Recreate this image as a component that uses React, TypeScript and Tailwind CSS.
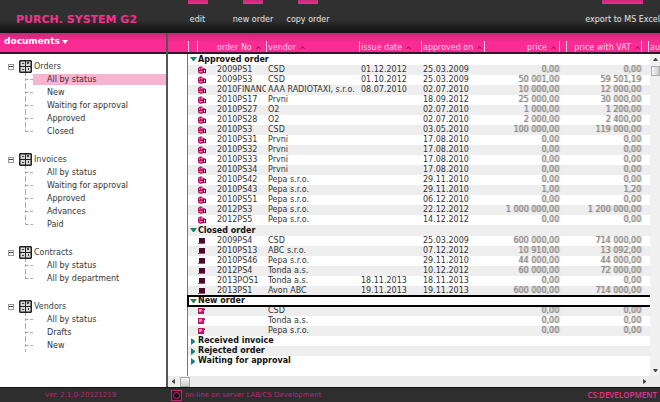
import { Fragment } from 'react'

type Status = 'approved' | 'closed' | 'draft'

interface Order {
  no?: string
  vendor: string
  issued?: string
  approved?: string
  price: string
  priceVat: string
}

interface OrderGroup {
  title: string
  status?: Status
  selected?: boolean
  orders: Order[]
}

interface NavGroup {
  title: string
  items: string[]
  active?: string
  open?: boolean
}

const navGroups: NavGroup[] = [
  {
    title: 'Orders',
    items: ['All by status', 'New', 'Waiting for approval', 'Approved', 'Closed'],
    active: 'All by status',
  },
  {
    title: 'Invoices',
    items: ['All by status', 'Waiting for approval', 'Approved', 'Advances', 'Paid'],
  },
  { title: 'Contracts', items: ['All by status', 'All by department'] },
  { title: 'Vendors', items: ['All by status', 'Drafts', 'New'], open: true },
]

const orderGroups: OrderGroup[] = [
  {
    title: 'Approved order',
    status: 'approved',
    orders: [
      { no: '2009PS1', vendor: 'CSD', issued: '01.12.2012', approved: '25.03.2009', price: '0,00', priceVat: '0,00' },
      { no: '2009PS3', vendor: 'CSD', issued: '01.10.2012', approved: '25.03.2009', price: '50 001,00', priceVat: '59 501,19' },
      { no: '2010FINANC', vendor: 'AAA RADIOTAXI, s.r.o.', issued: '08.07.2010', approved: '02.07.2010', price: '10 000,00', priceVat: '12 000,00' },
      { no: '2010PS17', vendor: 'Prvni', approved: '18.09.2012', price: '25 000,00', priceVat: '30 000,00' },
      { no: '2010PS27', vendor: 'O2', approved: '02.07.2010', price: '1 000,00', priceVat: '1 200,00' },
      { no: '2010PS28', vendor: 'O2', approved: '02.07.2010', price: '2 000,00', priceVat: '2 400,00' },
      { no: '2010PS3', vendor: 'CSD', approved: '03.05.2010', price: '100 000,00', priceVat: '119 000,00' },
      { no: '2010PS31', vendor: 'Prvni', approved: '17.08.2010', price: '0,00', priceVat: '0,00' },
      { no: '2010PS32', vendor: 'Prvni', approved: '17.08.2010', price: '0,00', priceVat: '0,00' },
      { no: '2010PS33', vendor: 'Prvni', approved: '17.08.2010', price: '0,00', priceVat: '0,00' },
      { no: '2010PS34', vendor: 'Prvni', approved: '17.08.2010', price: '0,00', priceVat: '0,00' },
      { no: '2010PS42', vendor: 'Pepa s.r.o.', approved: '29.11.2010', price: '0,00', priceVat: '0,00' },
      { no: '2010PS43', vendor: 'Pepa s.r.o.', approved: '29.11.2010', price: '1,00', priceVat: '1,20' },
      { no: '2010PS51', vendor: 'Pepa s.r.o.', approved: '06.12.2010', price: '0,00', priceVat: '0,00' },
      { no: '2012PS3', vendor: 'Pepa s.r.o.', approved: '22.12.2012', price: '1 000 000,00', priceVat: '1 200 000,00' },
      { no: '2012PS5', vendor: 'Pepa s.r.o.', approved: '14.12.2012', price: '0,00', priceVat: '0,00' },
    ],
  },
  {
    title: 'Closed order',
    status: 'closed',
    orders: [
      { no: '2009PS4', vendor: 'CSD', approved: '25.03.2009', price: '600 000,00', priceVat: '714 000,00' },
      { no: '2010PS13', vendor: 'ABC s.r.o.', approved: '07.12.2012', price: '10 910,00', priceVat: '13 092,00' },
      { no: '2010PS46', vendor: 'Pepa s.r.o.', approved: '29.11.2010', price: '44 000,00', priceVat: '44 000,00' },
      { no: '2012PS4', vendor: 'Tonda a.s.', approved: '10.12.2012', price: '60 000,00', priceVat: '72 000,00' },
      { no: '2013POS1', vendor: 'Tonda a.s.', issued: '18.11.2013', approved: '18.11.2013', price: '0,00', priceVat: '0,00' },
      { no: '2013PS1', vendor: 'Avon ABC', issued: '19.11.2013', approved: '19.11.2013', price: '600 000,00', priceVat: '714 000,00' },
    ],
  },
  {
    title: 'New order',
    status: 'draft',
    selected: true,
    orders: [
      { vendor: 'CSD', price: '0,00', priceVat: '0,00' },
      { vendor: 'Tonda a.s.', price: '0,00', priceVat: '0,00' },
      { vendor: 'Pepa s.r.o.', price: '0,00', priceVat: '0,00' },
    ],
  },
  { title: 'Received invoice', orders: [] },
  { title: 'Rejected order', orders: [] },
  { title: 'Waiting for approval', orders: [] },
]

function StatusIcon({ status }: { status?: Status }) {
  if (status === 'approved') {
    return (
      <svg viewBox="0 0 9 8" className="h-2 w-[9px]">
        <path d="M1 2 3 .5h2L6 2l2 .5V7H6l-1 .8H3L1 6.5z" fill="#b81263" />
        <path d="M2.2 2.6h1v1h-1zM4.4 1.6h1v1.6h-1z" fill="#fbd5e6" />
        <path d="M2.5 5 3.5 6h1L5.5 5" fill="none" stroke="#fbd5e6" strokeWidth="0.8" />
        <path d="M6 3h1v4H6zM8 3h1v4H8z" fill="#4a0428" />
        <path d="M7 4h1v2H7z" fill="#f3dce7" />
      </svg>
    )
  }
  if (status === 'closed') {
    return (
      <svg viewBox="0 0 9 8" className="h-2 w-[9px]">
        <path d="M2 1h6v5H2z" fill="#4c0a2c" />
        <path d="M1 6h7v1H1z" fill="#8d5572" />
      </svg>
    )
  }
  return (
    <svg viewBox="0 0 9 8" className="h-2 w-[9px]">
      <path d="M1 1h6v6H1z" fill="#b5125f" />
      <path d="M2 2h3v2L4 5H2z" fill="#f48fbe" />
      <path d="M4 4.5 7 1.8l1 1-3 2.9H4z" fill="#e5197d" />
      <path d="M7 1.5h1v1.6H7z" fill="#7b0a43" />
    </svg>
  )
}

function FolderIcon() {
  return (
    <svg viewBox="0 0 13 13" className="size-[13px] shrink-0">
      <path d="M1 0h11l1 1v11l-1 1H1l-1-1V1z" fill="#222" />
      <path d="M1.5 1.5H6V6H1.5zM7 1.5h4.5V6H7zM1.5 7H6v4.5H1.5zM7 7h4.5v4.5H7z" fill="#d8d8d8" />
      <path d="M3 3h2v1H3zM8 2h2v2H8zM3 9h2v1H3zM9 8h1v2H9z" fill="#444" />
    </svg>
  )
}

function SortMark() {
  return (
    <svg viewBox="0 0 5 3" className="ml-1 inline-block h-[3px] w-[5px] align-middle">
      <path d="M0.5 3 2.5 0.5 4.5 3" fill="none" stroke="#8c1550" />
    </svg>
  )
}

function Tick() {
  return <div className="mr-px h-[11px] w-px shrink-0 bg-[#ffc4e0]" />
}

function NavTree({ group }: { group: NavGroup }) {
  return (
    <section>
      <h2 className="flex h-[13px] items-center pl-2">
        <button
          aria-label={`Collapse ${group.title}`}
          className="mr-[5px] flex size-[6px] items-center justify-center border border-[#999]"
        >
          <span className="h-px w-1 bg-[#444]" />
        </button>
        <FolderIcon />
        <span className="ml-[2px] text-[#3c3c3c]">{group.title}</span>
      </h2>
      <ul className="ml-[25px]">
        {group.items.map((item, i) => (
          <li key={item} className="flex h-[13px]">
            <span
              className={`flex w-2 flex-col border-l border-dashed border-[#aaa] ${
                i === group.items.length - 1 && !group.open ? 'h-[7px]' : ''
              }`}
            >
              <span className="mt-[6px] border-t border-dashed border-[#aaa]" />
            </span>
            <a
              href="#"
              className={`my-px flex flex-1 items-center pl-[14px] leading-[11px] ${
                item === group.active ? 'bg-[#f5b4cf]' : ''
              }`}
            >
              {item}
            </a>
          </li>
        ))}
      </ul>
    </section>
  )
}

function OrdersTable() {
  let line = 0
  const stripe = () => (line++ % 2 === 1 ? 'bg-[#eee]' : 'bg-white')

  return (
    <table className="w-full table-fixed border-separate border-spacing-0 text-[8px] leading-[10px] whitespace-nowrap text-[#333]">
      <colgroup>
        <col className="w-[20px]" />
        <col className="w-[9px]" />
        <col className="w-[20px]" />
        <col className="w-[49px]" />
        <col className="w-[93px]" />
        <col className="w-[62px]" />
        <col className="w-[63px]" />
        <col className="w-[75px]" />
        <col className="w-[7px]" />
        <col className="w-[75px]" />
        <col className="w-[7px]" />
        <col />
      </colgroup>
      <thead>
        <tr className="h-[21px] bg-linear-to-b from-[#c42a74] via-[#fb2b94] via-45% to-[#fb2b94] text-left align-bottom leading-[13px] text-[#fbd3e6] [&>th]:border-b-2 [&>th]:border-[#2c1a22] [&>th]:p-0 [&>th]:font-normal">
          <th />
          <th><Tick /></th>
          <th><Tick /></th>
          <th><div className="flex h-[11px]"><span>order No<SortMark /></span></div></th>
          <th><div className="flex h-[11px]"><Tick /><span>vendor<SortMark /></span></div></th>
          <th><div className="flex h-[11px]"><Tick /><span>issue date<SortMark /></span></div></th>
          <th><div className="flex h-[11px]"><Tick /><span>approved on<SortMark /></span></div></th>
          <th><div className="flex h-[11px] justify-between"><Tick /><span className="pr-[3px]">price<SortMark /></span></div></th>
          <th><Tick /></th>
          <th><div className="flex h-[11px] justify-between"><Tick /><span className="pr-px">price with VAT<SortMark /></span></div></th>
          <th><Tick /></th>
          <th><div className="flex h-[11px]"><Tick /><span>au</span></div></th>
        </tr>
      </thead>
      <tbody className="[&_td]:p-0">
        {orderGroups.map((group) => (
          <Fragment key={group.title}>
            <tr className={group.status && !group.selected ? 'h-[11px]' : 'h-[10px]'}>
              <td className="border-r border-[#777]" />
              <th
                colSpan={11}
                className={`p-0 text-left font-bold text-[#111] ${stripe()} ${
                  group.selected ? 'outline-2 -outline-offset-1 outline-black' : ''
                }`}
              >
                <button className="flex items-center">
                  <svg viewBox="0 0 7 7" className="mr-px ml-[2px] size-[7px]">
                    <path d={group.orders.length ? 'M0 1h7L4 5H3z' : 'M1 0v7l4-3V3z'} fill="#0d8478" />
                  </svg>
                  {group.title}
                </button>
              </th>
            </tr>
            {group.orders.map((order, i) => (
              <tr key={i} className={`h-[10px] ${stripe()}`}>
                <td className="border-r border-[#777] bg-white" />
                <td />
                <td><StatusIcon status={group.status} /></td>
                <td className="overflow-hidden">{order.no}</td>
                <td className="pl-[2px]!">{order.vendor}</td>
                <td className="pl-[2px]!">{order.issued}</td>
                <td className="pl-[2px]!">{order.approved}</td>
                <td className="text-right text-[#888] text-shadow-[1px_0_1px_#999]">{order.price}</td>
                <td />
                <td className="text-right text-[#888] text-shadow-[1px_0_1px_#999]">{order.priceVat}</td>
                <td />
                <td />
              </tr>
            ))}
          </Fragment>
        ))}
      </tbody>
    </table>
  )
}

function HeaderButton({ label, tab, className }: { label: string; tab: string; className: string }) {
  return (
    <button className={`flex flex-col items-center gap-[11px] whitespace-nowrap ${className}`}>
      <span className={`h-[4px] bg-linear-to-b from-[#c42a74] to-[#f52c90] ${tab}`} />
      <span className="leading-[10px]">{label}</span>
    </button>
  )
}

export default function App() {
  return (
    <div className="flex min-h-screen flex-col overflow-hidden bg-white font-['DejaVu_Sans','Verdana',sans-serif] text-[8px] text-[#333]">
      <header className="flex h-[33px] bg-linear-to-b from-[#303030] from-60% to-[#111]">
        <h1 className="w-[187px] pt-[12px] pl-4 text-[11px] leading-[15px] font-bold text-[#f5308f]">PURCH. SYSTEM G2</h1>
        <nav className="flex flex-1 text-[#e4e4e4]">
          <HeaderButton label="edit" tab="w-5" className="w-[21px]" />
          <HeaderButton label="new order" tab="w-5" className="ml-[24px] w-[42px]" />
          <HeaderButton label="copy order" tab="w-5" className="ml-[12px] w-[44px]" />
          <HeaderButton label="export to MS Excel" tab="w-[41px]" className="ml-auto" />
        </nav>
      </header>
      <div className="flex flex-1">
        <aside className="flex w-[166px] shrink-0 flex-col">
          <div className="h-[21px] border-b-2 border-[#2c1a22] bg-linear-to-b from-[#c42a74] via-[#fb2b94] via-45% to-[#fb2b94]">
            <button className="ml-1 flex h-[18px] items-center text-[9px] font-bold text-white">
              documents
              <svg viewBox="0 0 6 4" className="ml-[2px] h-1 w-[6px]">
                <path d="M0 0h6L3 4z" fill="#fff" />
              </svg>
            </button>
          </div>
          <div className="flex flex-col gap-[15px] pt-[6px]">
            {navGroups.map((group) => (
              <NavTree key={group.title} group={group} />
            ))}
          </div>
        </aside>
        <main className="relative flex min-w-0 flex-1 flex-col border-l-2 border-[#555]">
          <OrdersTable />
          <div className="ml-[19px] flex-1 border-l border-[#777]" />
          <div className="flex h-[11px] items-center justify-between bg-[#ececec] pr-[14px] pl-1">
            <div className="flex items-center gap-[5px]">
              <svg viewBox="0 0 3 5" className="h-[5px] w-[3px]">
                <path d="M3 0v5L0 3V2z" fill="#444" />
              </svg>
              <span className="size-[10px] border border-[#aaa] bg-linear-to-b from-[#f6f6f6] to-[#ccc]" />
            </div>
            <svg viewBox="0 0 3 5" className="h-[5px] w-[3px]">
              <path d="M0 0v5l3-2V2z" fill="#444" />
            </svg>
          </div>
          <div className="absolute top-[21px] right-0 bottom-[11px] flex w-[10px] flex-col items-center justify-between bg-[#f0f0f0] py-1">
            <div className="flex flex-col items-center gap-[5px]">
              <svg viewBox="0 0 5 3" className="h-[3px] w-[5px]">
                <path d="M0 3h5L3 0H2z" fill="#444" />
              </svg>
              <span className="h-[10px] w-[9px] border border-[#aaa] bg-linear-to-r from-[#f6f6f6] to-[#ccc]" />
            </div>
            <svg viewBox="0 0 5 3" className="h-[3px] w-[5px]">
              <path d="M0 0h5L3 3H2z" fill="#444" />
            </svg>
          </div>
        </main>
      </div>
      <footer className="flex h-[15px] items-center border-t border-[#111] bg-[#2e2e2e] text-[7px] text-[#b52a72]">
        <span className="w-[171px] pl-[45px]">ver. 2.1.0-20121219</span>
        <svg viewBox="0 0 11 11" className="mr-[3px] size-[11px]">
          <rect x="0.5" y="0.5" width="10" height="10" fill="#3a1026" stroke="#c02873" />
          <circle cx="5.5" cy="5.5" r="3" fill="#111" stroke="#c02873" />
        </svg>
        <span>on-line on server LAB/CS Development</span>
        <span className="ml-auto pr-[3px] font-['Open_Sans',sans-serif] text-[8px] font-semibold text-[#e8308a]">
          CS:DEVELOPMENT
        </span>
      </footer>
    </div>
  )
}
